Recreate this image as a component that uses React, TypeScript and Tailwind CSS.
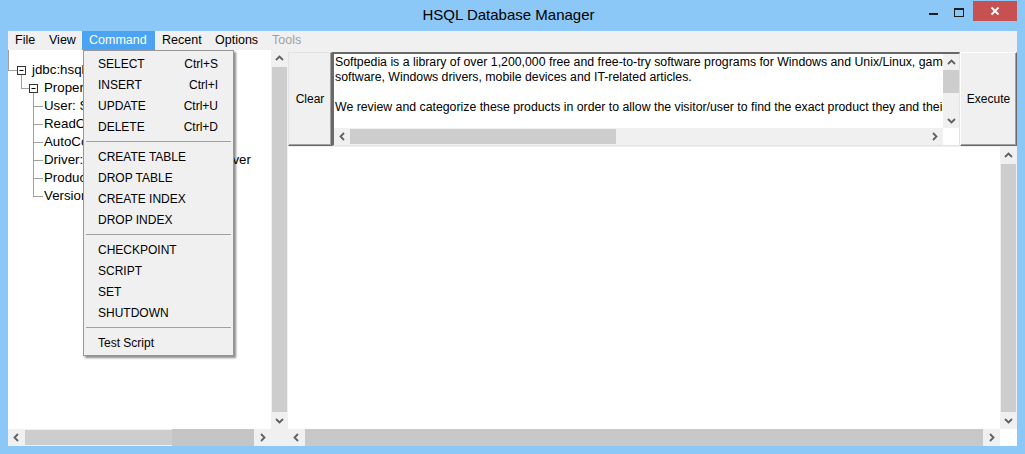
import React from 'react';

type Dir = 'up' | 'down' | 'left' | 'right';

const arrowPts: Record<Dir, string> = {
  up: '1,6 4.5,2.5 8,6',
  down: '1,3 4.5,6.5 8,3',
  left: '6,1 2.5,4.5 6,8',
  right: '3,1 6.5,4.5 3,8',
};

function Arrow({ dir }: { dir: Dir }) {
  return (
    <svg width="9" height="9" viewBox="0 0 9 9">
      <polyline points={arrowPts[dir]} fill="none" stroke="#606060" strokeWidth="1.8" />
    </svg>
  );
}

function VScroll() {
  return (
    <div className="w-[17px] flex flex-col bg-[#f0f0f0]">
      <div className="h-[17px] flex items-center justify-center shrink-0">
        <Arrow dir="up" />
      </div>
      <div className="flex-1 ml-[1px] mr-[1px] bg-[#cdcdcd]" />
      <div className="h-[17px] flex items-center justify-center shrink-0">
        <Arrow dir="down" />
      </div>
    </div>
  );
}

const menuGroups: [string, string?][][] = [
  [
    ['SELECT', 'Ctrl+S'],
    ['INSERT', 'Ctrl+I'],
    ['UPDATE', 'Ctrl+U'],
    ['DELETE', 'Ctrl+D'],
  ],
  [['CREATE TABLE'], ['DROP TABLE'], ['CREATE INDEX'], ['DROP INDEX']],
  [['CHECKPOINT'], ['SCRIPT'], ['SET'], ['SHUTDOWN']],
  [['Test Script']],
];

const treeRows = [
  { x: 32, text: 'jdbc:hsqldb:mem:.' },
  { x: 44, text: 'Properties' },
  { x: 44, text: 'User: SA' },
  { x: 44, text: 'ReadOnly: false' },
  { x: 44, text: 'AutoCommit: true' },
  { x: 44, text: 'Driver: org.hsqldb.jdbc.JDBCDriver' },
  { x: 44, text: 'Product: HSQL Database' },
  { x: 44, text: 'Version: 2.3.2' },
];

function MinusBox({ cx, cy }: { cx: number; cy: number }) {
  return (
    <g>
      <rect x={cx - 4} y={cy - 4} width="8" height="8" fill="#fff" stroke="#333" strokeWidth="1" />
      <line x1={cx - 2} y1={cy} x2={cx + 2} y2={cy} stroke="#000" strokeWidth="1" />
    </g>
  );
}

export default function App() {
  const menuItems = [
    { label: 'File', w: 'w-[34px]' },
    { label: 'View', w: 'w-[40px]' },
    { label: 'Command', w: 'w-[73px]', active: true },
    { label: 'Recent', w: 'w-[53px]' },
    { label: 'Options', w: 'w-[57px]' },
    { label: 'Tools', w: 'w-[50px]', disabled: true },
  ];

  return (
    <div className="relative w-[1025px] h-[454px] overflow-hidden bg-[#8bc8f8] flex flex-col font-['Liberation_Sans',Arial,sans-serif] text-[12px] text-black">
      {/* title bar */}
      <div className="h-[31px] shrink-0 grid grid-cols-[1fr_auto_1fr]">
        <div />
        <div className="text-[15px] leading-[30px] text-[#000] pr-[8px]">HSQL Database Manager</div>
        <div className="flex justify-end items-start pr-[8px]">
          <div className="w-[26px] h-[21px] flex items-center justify-center">
            <div className="w-[9px] h-[2px] bg-[#1e1e1e] mt-[6px]" />
          </div>
          <div className="w-[27px] h-[21px] flex items-center justify-center">
            <div className="w-[10px] h-[9px] border border-[#1e1e1e] border-t-2 mt-[3px] mr-[2px]" />
          </div>
          <div className="w-[44px] h-[20px] mt-[1px] bg-[#c75050] flex items-center justify-center">
            <svg width="10" height="10" viewBox="0 0 10 10">
              <path d="M1.5 1.5 L8.5 8.5 M8.5 1.5 L1.5 8.5" stroke="#fff" strokeWidth="1.8" />
            </svg>
          </div>
        </div>
      </div>

      {/* window body */}
      <div className="flex-1 mx-[8px] mb-[8px] bg-[#f0f0f0] flex flex-col">
        {/* menu bar */}
        <div className="h-[19px] shrink-0 flex text-[12.5px]">
          {menuItems.map((m) => (
            <div
              key={m.label}
              className={`${m.w} pl-[7px] leading-[19px] whitespace-nowrap ${
                m.active ? 'bg-[#4ba3f2] text-white' : m.disabled ? 'text-[#a0a0a0]' : ''
              }`}
            >
              {m.label}
            </div>
          ))}
        </div>

        {/* main */}
        <div className="flex-1 flex min-h-0">
          {/* left tree */}
          <div className="w-[263px] bg-white relative overflow-hidden">
            <svg className="absolute left-0 top-0" width="263" height="220">
              <g stroke="#a0a0a0" strokeWidth="1" shapeRendering="crispEdges">
                <line x1="0.5" y1="0" x2="0.5" y2="20" />
                <line x1="0" y1="20.5" x2="9" y2="20.5" />
                <line x1="13.5" y1="24" x2="13.5" y2="38.5" />
                <line x1="13.5" y1="38.5" x2="21" y2="38.5" />
                <line x1="25.5" y1="42" x2="25.5" y2="146.5" />
                {[56, 74, 92, 110, 128, 146].map((y) => (
                  <line key={y} x1="25.5" y1={y + 0.5} x2="35" y2={y + 0.5} />
                ))}
              </g>
              <MinusBox cx={13.5} cy={20.5} />
              <MinusBox cx={25.5} cy={38.5} />
            </svg>
            <div className="pt-[11px] relative">
              {treeRows.map((r) => (
                <div
                  key={r.text}
                  className="h-[18px] leading-[18px] whitespace-nowrap text-[13.3px]"
                  style={{ paddingLeft: r.x - 8 }}
                >
                  {r.text}
                </div>
              ))}
            </div>
          </div>
          <VScroll />

          {/* right */}
          <div className="flex-1 flex flex-col min-w-0">
            <div className="h-[97px] shrink-0 pt-[2px] pb-[1px] flex">
              <div className="w-[44px] h-full flex items-center justify-center border-t border-l border-[#e3e3e3] border-r border-b border-r-[#696969] border-b-[#696969] shadow-[inset_-1px_-1px_0_#a0a0a0]">
                Clear
              </div>
              <div className="flex-1 min-w-0 flex flex-col bg-white border-t-2 border-l-2 border-t-[#696969] border-l-[#696969] border-b border-r border-b-[#e3e3e3] border-r-[#e3e3e3]">
                <div className="flex-1 flex min-h-0">
                  <div className="flex-1 min-w-0 overflow-hidden pl-[1px] pt-[1px] leading-[15px] whitespace-nowrap text-[12.3px]">
                    <div>Softpedia is a library of over 1,200,000 free and free-to-try software programs for Windows and Unix/Linux, games, Mac</div>
                    <div>software, Windows drivers, mobile devices and IT-related articles.</div>
                    <div>&nbsp;</div>
                    <div>We review and categorize these products in order to allow the visitor/user to find the exact product they and their system needs.</div>
                  </div>
                  <div className="w-[16px] flex flex-col bg-[#f0f0f0]">
                    <div className="h-[16px] flex items-center justify-center">
                      <Arrow dir="up" />
                    </div>
                    <div className="flex-1">
                      <div className="h-[23px] bg-[#cdcdcd]" />
                    </div>
                    <div className="h-[16px] flex items-center justify-center">
                      <Arrow dir="down" />
                    </div>
                  </div>
                </div>
                <div className="h-[17px] shrink-0 flex bg-[#f0f0f0]">
                  <div className="w-[16px] flex items-center justify-center">
                    <Arrow dir="left" />
                  </div>
                  <div className="flex-1 flex py-[1px]">
                    <div className="w-[266px] bg-[#cdcdcd]" />
                  </div>
                  <div className="w-[17px] flex items-center justify-center">
                    <Arrow dir="right" />
                  </div>
                  <div className="w-[16px] bg-white" />
                </div>
              </div>
              <div className="w-[57px] h-full flex items-center justify-center border-t border-l border-[#ffffff] border-r border-b border-r-[#696969] border-b-[#696969] shadow-[inset_-1px_-1px_0_#a0a0a0]">
                Execute
              </div>
            </div>
            <div className="flex-1 flex min-h-0">
              <div className="flex-1 bg-white" />
              <VScroll />
            </div>
          </div>
        </div>

        {/* bottom scroll row */}
        <div className="h-[17px] shrink-0 flex">
          <div className="w-[263px] flex bg-[#f0f0f0]">
            <div className="w-[17px] flex items-center justify-center">
              <Arrow dir="left" />
            </div>
            <div className="flex-1 flex items-stretch">
              <div className="w-[147px] my-[1px] bg-[#cdcdcd]" />
              <div className="flex-1 bg-[#c5c5c5]" />
            </div>
            <div className="w-[17px] flex items-center justify-center">
              <Arrow dir="right" />
            </div>
          </div>
          <div className="w-[17px] bg-[#f0f0f0]" />
          <div className="flex-1 flex bg-[#f0f0f0]">
            <div className="w-[17px] flex items-center justify-center">
              <Arrow dir="left" />
            </div>
            <div className="flex-1 bg-[#c8c8c8]" />
            <div className="w-[17px] flex items-center justify-center">
              <Arrow dir="right" />
            </div>
          </div>
          <div className="w-[17px] bg-white" />
        </div>
      </div>

      {/* Command dropdown */}
      <div className="absolute left-[83px] top-[50px] w-[151px] bg-[#f0f0f0] border border-[#979797] py-[2px] shadow-[2px_2px_2px_rgba(0,0,0,0.45)]">
        {menuGroups.map((group, gi) => (
          <div key={gi}>
            {gi > 0 && (
              <div className="h-[9px] flex items-center px-[2px]">
                <div className="flex-1 h-[1px] bg-[#a0a0a0]" />
              </div>
            )}
            {group.map(([label, sc]) => (
              <div key={label} className="h-[21px] flex items-center justify-between pl-[14px] pr-[15px]">
                <span>{label}</span>
                {sc && <span>{sc}</span>}
              </div>
            ))}
          </div>
        ))}
      </div>
    </div>
  );
}
